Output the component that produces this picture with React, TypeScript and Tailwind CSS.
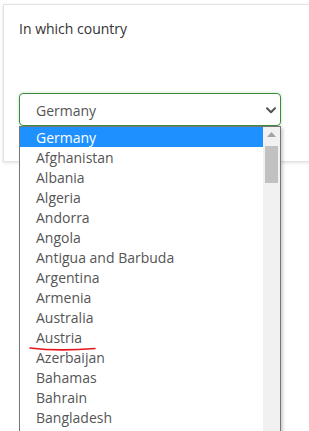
const COUNTRIES = [
  "Germany",
  "Afghanistan",
  "Albania",
  "Algeria",
  "Andorra",
  "Angola",
  "Antigua and Barbuda",
  "Argentina",
  "Armenia",
  "Australia",
  "Austria",
  "Azerbaijan",
  "Bahamas",
  "Bahrain",
  "Bangladesh",
];

export default function App() {
  return (
    <div
      className="relative h-[431px] w-[309px] overflow-hidden bg-white"
      style={{ fontFamily: '"Open Sans", "Noto Sans", sans-serif' }}
    >
      {/* Card */}
      <div className="ml-[3px] mt-[4px] h-[158px] w-[330px] border border-[#e3e3e3] bg-white px-[15px] pt-[14px] shadow-[0_1px_3px_rgba(0,0,0,0.12)]">
        <p className="text-[14px] leading-[20px] text-[#333]">In which country</p>

        {/* Select */}
        <div className="relative mt-[54px] w-[262px]">
          <div className="flex h-[33px] items-center justify-between rounded-[4px] border border-[#3d8c3d] pl-[16px] pr-[4px] shadow-[0_0_3px_rgba(60,140,60,0.35)]">
            <span className="pt-[1px] text-[14px] text-[#555]">Germany</span>
            <svg width="10" height="7" viewBox="0 0 10 7" className="mt-[1px]">
              <polyline
                points="1,1.2 5,5.2 9,1.2"
                fill="none"
                stroke="#555"
                strokeWidth="2"
                strokeLinecap="round"
                strokeLinejoin="round"
              />
            </svg>
          </div>

          {/* Open listbox */}
          <div className="absolute left-0 top-[33px] flex w-[262px] border border-[#767676] bg-white shadow-[2px_2px_3px_rgba(0,0,0,0.2)]">
            <ul className="flex-1">
              {COUNTRIES.map((c, i) => (
                <li
                  key={c}
                  className={
                    i === 0
                      ? "h-[20px] bg-[#1e90ff] pl-[16px] pt-[1px] text-[14px] leading-[19px] text-white"
                      : "h-[20px] pl-[16px] pt-[1px] text-[14px] leading-[19px] text-[#555]"
                  }
                >
                  {c}
                </li>
              ))}
              <li className="h-[20px]" />
            </ul>
            {/* Scrollbar */}
            <div className="flex w-[17px] flex-col items-center bg-[#f1f1f1]">
              <svg width="9" height="5" viewBox="0 0 9 5" className="mt-[5px]">
                <polygon points="0,5 4.5,0 9,5" fill="#a3a3a3" />
              </svg>
              <div className="mt-[9px] h-[37px] w-[13px] bg-[#c1c1c1]" />
            </div>
          </div>
        </div>
      </div>

      {/* Red annotation under Austria */}
      <svg
        className="absolute left-[28px] top-[345px]"
        width="70"
        height="8"
        viewBox="0 0 70 8"
      >
        <path d="M2 3 Q 30 6.5 67 3.5" fill="none" stroke="#e8141c" strokeWidth="1.6" strokeLinecap="round" />
      </svg>
    </div>
  );
}
